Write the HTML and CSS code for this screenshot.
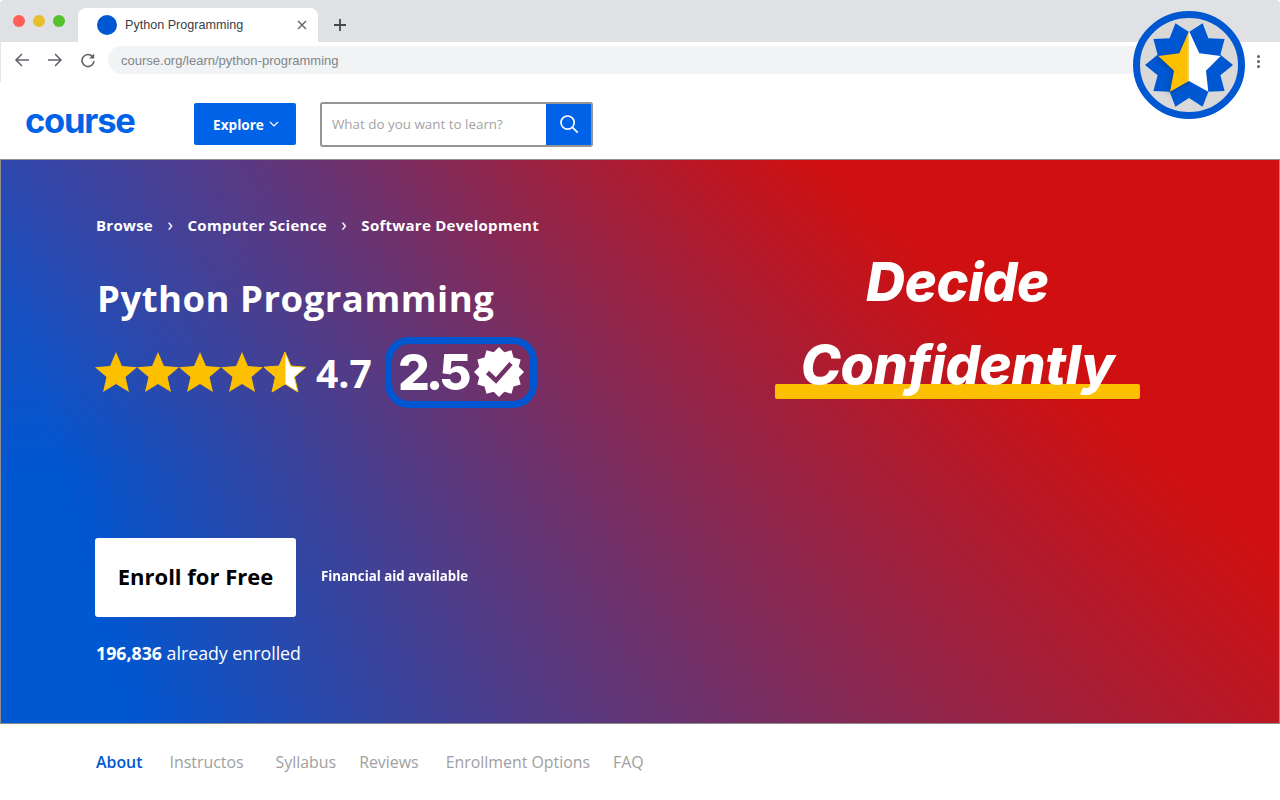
FILE: index.html
```html
<!DOCTYPE html>
<html lang="en">
<head>
<meta charset="utf-8">
<title>Python Programming</title>
<link rel="stylesheet" href="styles.css">
</head>
<body>
<div class="page">
  <div class="tabbar">
    <div class="dots"><i class="dot red"></i><i class="dot yellow"></i><i class="dot green"></i></div>
    <div class="tab">
      <span class="favicon"></span>
      <span class="tab-title">Python Programming</span>
      <svg class="tab-close" width="10" height="10" viewBox="0 0 10 10"><path d="M1 1l8 8M9 1l-8 8" stroke="#5f6368" stroke-width="1.4" fill="none"/></svg>
    </div>
    <svg class="tab-plus" width="12" height="12" viewBox="0 0 12 12"><path d="M6 0v12M0 6h12" stroke="#45474c" stroke-width="1.8" fill="none"/></svg>
  </div>
  <div class="toolbar">
    <svg class="tool" width="16" height="16" viewBox="0 0 16 16"><path d="M15 8H2M8 2L2 8l6 6" stroke="#5f6368" stroke-width="1.5" fill="none"/></svg>
    <svg class="tool" width="16" height="16" viewBox="0 0 16 16"><path d="M1 8h13M8 2l6 6-6 6" stroke="#5f6368" stroke-width="1.5" fill="none"/></svg>
    <svg class="tool" width="16" height="16" viewBox="0 0 16 16"><path d="M13 5.2A6 6 0 1 0 14 9" stroke="#5f6368" stroke-width="1.6" fill="none"/><path d="M14.2 1.6v5h-5z" fill="#5f6368"/></svg>
    <div class="omnibox">course.org/learn/python-programming</div>
    <div class="kebab"><i></i><i></i><i></i></div>
  </div>
  <header class="site-header">
    <div class="logo">course</div>
    <button class="explore">Explore <svg width="10" height="6" viewBox="0 0 10 6"><path d="M1 1l4 4 4-4" stroke="#fff" stroke-width="1.2" fill="none"/></svg></button>
    <div class="search">
      <span class="search-text">What do you want to learn?</span>
      <span class="search-btn"><svg width="20" height="20" viewBox="0 0 20 20"><circle cx="8.6" cy="8.6" r="6.6" stroke="#fff" stroke-width="1.7" fill="none"/><path d="M13.4 13.4l5.4 5.2" stroke="#fff" stroke-width="1.7" fill="none"/></svg></span>
    </div>
  </header>
  <section class="hero">
    <div class="hero-left">
      <nav class="crumbs">
        <span>Browse</span><span class="sep">›</span><span>Computer Science</span><span class="sep">›</span><span>Software Development</span>
      </nav>
      <h1 class="title">Python Programming</h1>
      <div class="rating">
        <svg class="stars" width="214" height="44" viewBox="0 0 214 44">
          <defs>
            <polygon id="s" points="21,2 26.9,16 42,17.2 30.5,27 34,42 21,34 8,42 11.5,27 0,17.2 15.1,16"/>
            <clipPath id="half"><rect x="0" y="0" width="21.5" height="44"/></clipPath>
          </defs>
          <use href="#s" x="0" fill="#fdc000"/>
          <use href="#s" x="42" fill="#fdc000"/>
          <use href="#s" x="84" fill="#fdc000"/>
          <use href="#s" x="126" fill="#fdc000"/>
          <g transform="translate(169 0)"><use href="#s" fill="#fff" stroke="#fdc000"/><use href="#s" fill="#fdc000" clip-path="url(#half)"/></g>
        </svg>
        <span class="score">4.7</span>
        <div class="badge">
          <span class="badge-num">2.5</span>
          <svg width="52" height="52" viewBox="0 0 52 52">
            <defs><mask id="chk"><rect width="52" height="52" fill="#fff"/><path d="M14.5 26.5l8.5 8 15-17" stroke="#000" stroke-width="4.5" fill="none"/></mask></defs>
            <polygon mask="url(#chk)" fill="#fff" points="51,26 45.8,31.3 47.65,38.5 40.5,40.5 38.5,47.65 31.3,45.8 26,51 20.7,45.8 13.5,47.65 11.5,40.5 4.35,38.5 6.2,31.3 1,26 6.2,20.7 4.35,13.5 11.5,11.5 13.5,4.35 20.7,6.2 26,1 31.3,6.2 38.5,4.35 40.5,11.5 47.65,13.5 45.8,20.7"/>
          </svg>
        </div>
      </div>
      <div class="cta-row">
        <button class="enroll">Enroll for Free</button>
        <span class="aid">Financial aid available</span>
      </div>
      <p class="enrolled"><b>196,836</b> already enrolled</p>
    </div>
    <div class="hero-right">
      <div class="slogan">Decide</div>
      <div class="slogan second"><span class="slogan-text">Confidently</span></div>
    </div>
  </section>
  <nav class="tabs">
    <a class="active">About</a><a>Instructos</a><a>Syllabus</a><a>Reviews</a><a>Enrollment Options</a><a>FAQ</a>
  </nav>
  <svg class="seal" width="112" height="112" viewBox="0 0 112 112">
    <defs>
      <linearGradient id="gold" x1="0" x2="1" y1="0" y2="0"><stop offset="0" stop-color="#fdc000"/><stop offset=".92" stop-color="#fdc000"/><stop offset="1" stop-color="#f0d98a"/></linearGradient>
      <filter id="blur" x="-30%" y="-30%" width="160%" height="160%"><feGaussianBlur stdDeviation="2"/></filter>
    </defs>
    <ellipse cx="56" cy="56" rx="52.5" ry="50.5" fill="#d9d9d9" stroke="#0057d2" stroke-width="7"/>
    <polygon fill="#0057d2" points="100,56 87.4,66.2 91.6,81.9 75.4,82.7 69.6,97.8 56,89 42.4,97.8 36.6,82.7 20.4,81.9 24.6,66.2 12,56 24.6,45.8 20.4,30.1 36.6,29.3 42.4,14.2 56,23 69.6,14.2 75.4,29.3 91.6,30.1 87.4,45.8"/>
    <polygon fill="#00306f" opacity=".5" filter="url(#blur)" points="55,25 45,46 23,49 40,63 35,85 55,74"/>
    <polygon fill="#fff" points="56,22 66.3,44.3 87.7,47 73,61.7 75.3,82.7 56,72"/>
    <polygon fill="url(#gold)" points="56,22 46.3,44.3 25.3,47 41,61.7 37,82.7 56,72"/>
  </svg>
</div>
</body>
</html>
```
FILE: styles.css
```css
* { box-sizing: border-box; }
html, body { margin: 0; padding: 0; }
body { width: 1280px; height: 800px; overflow: hidden; background: #fff; font-family: "Open Sans", sans-serif; }
.page { position: relative; width: 1280px; height: 800px; overflow: hidden; }

.tabbar { height: 42px; background: #dfe1e5; display: flex; align-items: flex-end; padding-left: 13px; border-radius: 4px 4px 0 0; }
.dots { display: flex; gap: 8px; align-self: flex-start; margin-top: 15px; width: 65px; }
.dot { width: 12px; height: 12px; border-radius: 50%; display: block; }
.dot.red { background: #ff5f57; }
.dot.yellow { background: #e6c02a; }
.dot.green { background: #55c12f; }
.tab { width: 240px; height: 34px; background: #fff; border-radius: 8px 8px 0 0; display: flex; align-items: center; padding-left: 19px; }
.favicon { width: 20px; height: 20px; border-radius: 50%; background: #0057d2; margin-right: 8px; }
.tab-title { font: 12.6px "Liberation Sans", sans-serif; color: #3c4043; width: 172px; }
.tab-plus { margin: 0 0 11px 16px; }

.toolbar { height: 40px; display: flex; align-items: flex-start; padding: 4px 0 0 13px; background: #fff; border-left: 1px solid #e8e8e8; }
.tool { margin: 6px 17px 0 0; flex: none; }
.tool:nth-child(3) { margin-right: 12px; }
.omnibox { width: 1132px; height: 28px; border-radius: 14px; background: #f1f3f4; font: 13px/29px "Liberation Sans", sans-serif; color: #80868b; padding-left: 13px; }
.kebab { margin: 9px 0 0 17px; display: flex; flex-direction: column; gap: 2px; }
.kebab i { display: block; width: 3px; height: 3px; border-radius: 50%; background: #5f6368; }

.site-header { height: 77px; display: flex; align-items: center; padding: 7px 0 0 25px; background: #fff; }
.logo { width: 169px; font: 700 34.5px/40px Inter, sans-serif; color: #0062e6; letter-spacing: -1.2px; margin-top: -6px; }
.explore { width: 102px; height: 42px; margin-right: 24px; border: 0; border-radius: 2px; background: #0062e6; color: #fff; font: 700 13.6px "Open Sans", sans-serif; display: flex; align-items: center; justify-content: center; gap: 5px; padding: 0 0 0 2px; }
.search { width: 273px; height: 45px; border: 2px solid #949494; border-radius: 3px; display: flex; align-items: stretch; }
.search-text { flex: 1; padding-left: 10px; font: 13.4px/41px "Open Sans", sans-serif; color: #a3a3a3; }
.search-btn { width: 45px; background: #0062e6; display: flex; align-items: center; justify-content: center; }

.hero { height: 565px; border: 1px solid #8f8f8f; background: radial-gradient(520px 320px at 0 0, rgba(120, 50, 120, .35), rgba(120, 50, 120, 0)), conic-gradient(from 0deg at -282px -960px, #d01010 0deg, #d01010 131deg, #0057d2 165deg, #0057d2 360deg); display: flex; color: #fff; }
.hero-left { width: 640px; padding: 52px 0 0 95px; }
.crumbs { display: flex; font: 700 15px/26px "Open Sans", sans-serif; letter-spacing: .28px; }
.sep { width: 34.5px; text-align: center; font-weight: 400; font-size: 18px; line-height: 24px; }
.title { margin: 37px 0 0 1px; font: 700 36.5px/46px "Open Sans", sans-serif; letter-spacing: .5px; }
.rating { display: flex; align-items: center; margin-top: 15px; height: 72px; margin-left: -1px; }
.stars { flex: none; margin-right: 7px; width: 214px; }
.score { font: 700 39px "Open Sans", sans-serif; width: 69px; }
.badge { width: 152px; height: 71px; border: 7px solid #0057d2; border-radius: 24px; display: flex; align-items: center; padding-left: 6px; gap: 6px; flex: none; }
.badge-num { font: 800 50px Inter, sans-serif; letter-spacing: -4.2px; }
.cta-row { display: flex; align-items: center; margin-top: 130px; margin-left: -1px; }
.enroll { width: 201px; height: 79px; border: 0; border-radius: 3px; background: #fff; color: #000; font: 700 22px "Open Sans", sans-serif; padding: 0 0 4px; }
.aid { margin: 0 0 6px 25px; font: 700 15px "Open Sans", sans-serif; transform-origin: left; transform: scaleX(.885); white-space: nowrap; }
.enrolled { margin: 24px 0 0 0; font: 400 17.75px/24px "Open Sans", sans-serif; }
.enrolled b { font-weight: 700; }

.hero-right { width: 637px; padding-top: 88px; display: flex; flex-direction: column; align-items: center; transform: translateX(-2px); }
.slogan { font: italic 800 54px/68px Inter, sans-serif; letter-spacing: -.4px; height: 68px; white-space: nowrap; }
.second { margin-top: 15px; width: 365px; text-align: center; position: relative; }
.slogan-text { position: relative; z-index: 1; }
.second::after { content: ""; position: absolute; left: 0; right: 0; top: 53px; height: 15px; background: #fdc000; border-radius: 2px; }

.tabs { height: 76px; display: flex; align-items: center; padding-left: 96px; font: 400 15.9px "Open Sans", sans-serif; color: #a0a0a0; }
.tabs a { margin-right: 23px; }
.tabs a:nth-child(1), .tabs a:nth-child(4) { margin-right: 27px; }
.tabs a:nth-child(2) { margin-right: 32px; }
.tabs .active { color: #0057d2; font-weight: 600; }

.seal { position: absolute; left: 1133px; top: 9px; }
```
